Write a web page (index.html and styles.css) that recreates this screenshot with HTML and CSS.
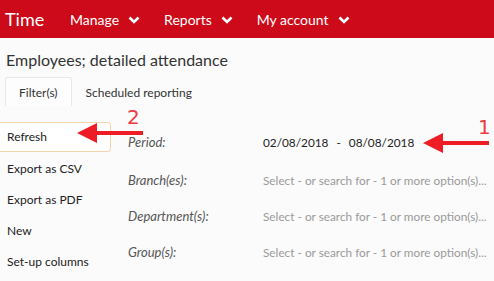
FILE: index.html
```html
<!DOCTYPE html>
<html lang="en">
<head>
  <meta charset="UTF-8" />
  <title>Employees; detailed attendance</title>
  <link rel="stylesheet" href="styles.css">
</head>
<body>

  <div class="topbar">
    <div class="brand">Time</div>
    <div class="menu">Manage <svg class="chev" width="12" height="8" viewBox="0 0 12 8"><path d="M1.5 1.5 L6 6 L10.5 1.5" fill="none" stroke="white" stroke-width="2.6"/></svg></div>
    <div class="menu">Reports <svg class="chev" width="12" height="8" viewBox="0 0 12 8"><path d="M1.5 1.5 L6 6 L10.5 1.5" fill="none" stroke="white" stroke-width="2.6"/></svg></div>
    <div class="menu">My account <svg class="chev" width="12" height="8" viewBox="0 0 12 8"><path d="M1.5 1.5 L6 6 L10.5 1.5" fill="none" stroke="white" stroke-width="2.6"/></svg></div>
  </div>

  <h1>Employees; detailed attendance</h1>

  <div class="tabs">
    <div class="tab active">Filter(s)</div>
    <div class="tab">Scheduled reporting</div>
  </div>

  <div class="content">
    <ul class="actions">
      <li class="current">Refresh</li>
      <li>Export as CSV</li>
      <li>Export as PDF</li>
      <li>New</li>
      <li>Set-up columns</li>
    </ul>

    <div class="filters">
      <div class="row first">
        <div class="label">Period:</div>
        <div class="value">02/08/2018 <span class="dash">-</span> 08/08/2018</div>
      </div>
      <div class="row">
        <div class="label">Branch(es):</div>
        <div class="value empty">Select - or search for - 1 or more option(s)...</div>
      </div>
      <div class="row">
        <div class="label">Department(s):</div>
        <div class="value empty">Select - or search for - 1 or more option(s)...</div>
      </div>
      <div class="row">
        <div class="label">Group(s):</div>
        <div class="value empty">Select - or search for - 1 or more option(s)...</div>
      </div>
    </div>
  </div>

  <!-- annotation arrows -->
  <div class="note note-1">
    <span class="num">1</span>
    <svg width="66" height="22" viewBox="0 0 66 22"><path d="M0 11 L20 1 L20 9 L66 9 L66 13 L20 13 L20 21 Z" fill="#ee1c24"/></svg>
  </div>
  <div class="note note-2">
    <span class="num">2</span>
    <svg width="66" height="22" viewBox="0 0 66 22"><path d="M0 11 L20 1 L20 9 L66 9 L66 13 L20 13 L20 21 Z" fill="#ee1c24"/></svg>
  </div>

</body>
</html>
```

FILE: styles.css
```css
* {
  box-sizing: border-box;
  margin: 0;
  padding: 0;
  font-family: Lato, 'Open Sans', sans-serif;
}

body {
  background-color: #fbfbfb;
  color: #222;
  width: 494px;
  height: 281px;
  overflow: hidden;
  position: relative;
}

.topbar {
  height: 38px;
  background-color: #cc0a19;
  color: white;
  display: flex;
  align-items: center;
  padding-left: 5px;
}

.brand {
  font-size: 18px;
  width: 65px;
}

.menu {
  font-size: 14px;
  display: flex;
  align-items: center;
  margin-right: 24px;
}

.chev {
  display: block;
  margin-left: 9px;
  margin-top: 1px;
}

h1 {
  font-size: 16px;
  font-weight: normal;
  color: #333;
  padding: 12px 0 0 6px;
  height: 39px;
}

.tabs {
  display: flex;
  padding-left: 5px;
  height: 29px;
}

.tab {
  font-size: 12px;
  color: #333;
  padding: 7px 13px 0 13px;
  border: 1px solid transparent;
  border-bottom: none;
}

.tab.active {
  border-color: #e8e8e8;
  border-radius: 3px 3px 0 0;
  background: #fdfdfd;
}

.content {
  display: flex;
  margin-top: 16px;
}

.actions {
  list-style: none;
  width: 111px;
}

.actions li {
  font-size: 12px;
  height: 31px;
  line-height: 31px;
  padding-left: 7px;
  color: #222;
}

.actions li.current {
  height: 30px;
  line-height: 28px;
  margin-bottom: 1px;
  border: 1px solid #f5d3ad;
  border-left: none;
  border-radius: 0 4px 4px 0;
  background: #fff;
}

.filters {
  padding-left: 17px;
  flex: 1;
}

.row {
  display: flex;
  align-items: center;
  height: 36px;
}

.row.first {
  height: 40px;
}

.label {
  width: 135px;
  font-size: 13px;
  font-style: italic;
  color: #555;
}

.value {
  font-size: 11.8px;
  color: #222;
  white-space: nowrap;
}

.dash {
  margin: 0 5px;
}

.value.empty {
  color: #9a9a9a;
}

.note {
  position: absolute;
}

.note svg {
  display: block;
}

.num {
  position: absolute;
  color: #ee3a43;
  font-size: 20px;
  font-family: 'DejaVu Sans', sans-serif;
}

.note-1 {
  left: 423px;
  top: 132px;
}

.note-1 .num {
  left: 55px;
  top: -17px;
}

.note-2 {
  left: 77px;
  top: 122px;
}

.note-2 .num {
  left: 50px;
  top: -17px;
}
```
